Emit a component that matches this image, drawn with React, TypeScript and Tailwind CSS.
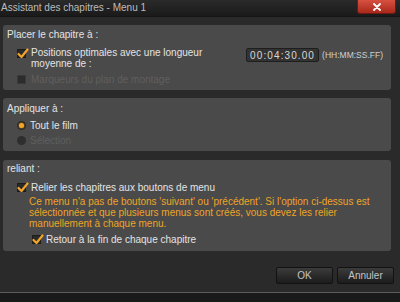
import React from 'react';

type BoxProps = { checked?: boolean; disabled?: boolean };

function CheckBox({ checked, disabled }: BoxProps) {
  return (
    <span
      className={`relative block w-[9px] h-[9px] shrink-0 border ${
        disabled ? 'bg-[#2c2c2c] border-[#3a3a3a]' : 'bg-[#2a2a2a] border-[#1c1c1c]'
      }`}
    >
      {checked && (
        <svg className="absolute -top-[2px] -left-[1px] w-[12px] h-[11px]" viewBox="0 0 12 11">
          <path d="M1.5 6 L4.5 9 L10.5 1.5" stroke="#f2a428" strokeWidth="2.2" fill="none" strokeLinecap="round" strokeLinejoin="round" />
        </svg>
      )}
    </span>
  );
}

function Radio({ checked, disabled }: BoxProps) {
  return (
    <span
      className={`flex items-center justify-center w-[9px] h-[9px] rounded-full shrink-0 ${
        disabled ? 'bg-[#2e2e2e]' : 'bg-[#2a2a2a] border border-[#202020]'
      }`}
    >
      {checked && <span className="block w-[5px] h-[5px] rounded-full bg-[#f2a428] shadow-[0_0_2px_#f2a428]" />}
    </span>
  );
}

export default function App() {
  return (
    <div className="w-[400px] h-[302px] flex flex-col bg-[#2a2a2a] font-['Liberation_Sans',Arial,sans-serif] text-[10px] text-[#e4e4e4] overflow-hidden">
      {/* barre de titre */}
      <div className="h-[17px] shrink-0 flex items-start justify-between bg-gradient-to-b from-[#2a2a2a] to-[#1a1a1a] border-b border-[#161616]">
        <span className="pl-[1px] leading-[15px] text-[#bdbdbd]">Assistant des chapitres - Menu 1</span>
        <div className="mr-[4px] w-[39px] h-[14px] flex items-center justify-center rounded-b-[3px] bg-gradient-to-b from-[#d8503f] to-[#a8281b] border border-t-0 border-[#6e1a12]">
          <svg width="8" height="8" viewBox="0 0 8 8">
            <path d="M1 1 L7 7 M7 1 L1 7" stroke="#ffffff" strokeWidth="1.8" strokeLinecap="round" />
          </svg>
        </div>
      </div>

      <div className="flex-1 flex flex-col pl-[3px] pr-[9px] pt-[8px]">
        {/* Placer le chapitre */}
        <div className="h-[65px] shrink-0 rounded-[3px] bg-[#4a4a4a] pt-[4px] pl-[4px] pr-[8px]">
          <div className="leading-[12px]">Placer le chapitre à :</div>
          <div className="mt-[6px] flex items-start">
            <div className="ml-[10px] mt-[2px]"><CheckBox checked /></div>
            <div className="ml-[5px] w-[180px] leading-[11px]">Positions optimales avec une longueur moyenne de :</div>
            <div className="ml-auto mt-[1px] flex items-center">
              <div className="w-[73px] h-[14px] flex items-center justify-center bg-[#333333] border border-[#1e1e1e] rounded-[2px] tracking-[1.1px] text-[#d8d8d8]">
                00:04:30.00
              </div>
              <span className="ml-[3px] text-[8.5px] text-[#d0d0d0]">(HH:MM:SS.FF)</span>
            </div>
          </div>
          <div className="mt-[5px] flex items-center leading-[11px]">
            <div className="ml-[10px]"><CheckBox disabled /></div>
            <span className="ml-[5px] text-[#5f5f5f]">Marqueurs du plan de montage</span>
          </div>
        </div>

        {/* Appliquer à */}
        <div className="mt-[8px] h-[53px] shrink-0 rounded-[3px] bg-[#4a4a4a] pt-[5px] pl-[4px]">
          <div className="leading-[12px]">Appliquer à :</div>
          <div className="mt-[5px] flex items-center leading-[11px]">
            <div className="ml-[10px]"><Radio checked /></div>
            <span className="ml-[4px]">Tout le film</span>
          </div>
          <div className="mt-[4px] flex items-center leading-[11px]">
            <div className="ml-[10px]"><Radio disabled /></div>
            <span className="ml-[4px] text-[#5f5f5f]">Sélection</span>
          </div>
        </div>

        {/* reliant */}
        <div className="mt-[9px] h-[91px] shrink-0 rounded-[3px] bg-[#4a4a4a] pt-[3px] pl-[4px]">
          <div className="leading-[12px]">reliant :</div>
          <div className="mt-[7px] flex items-center leading-[11px]">
            <div className="ml-[10px]"><CheckBox checked /></div>
            <span className="ml-[5px]">Relier les chapitres aux boutons de menu</span>
          </div>
          <div className="mt-[3px] ml-[22px] leading-[11px] whitespace-nowrap text-[#eea426]">
            Ce menu n'a pas de boutons 'suivant' ou 'précédent'. Si l'option ci-dessus est
            <br />
            sélectionnée et que plusieurs menus sont créés, vous devez les relier
            <br />
            manuellement à chaque menu.
          </div>
          <div className="mt-[5px] flex items-center leading-[11px]">
            <div className="ml-[25px]"><CheckBox checked /></div>
            <span className="ml-[5px]">Retour à la fin de chaque chapitre</span>
          </div>
        </div>

        <div className="mt-[16px] flex justify-end gap-[4px] -mr-[3px]">
          <button className="w-[57px] h-[17px] rounded-[2px] border border-[#121212] bg-gradient-to-b from-[#3c3c3c] to-[#1c1c1c] text-[10px] text-[#c4c4c4] leading-none">
            OK
          </button>
          <button className="w-[57px] h-[17px] rounded-[2px] border border-[#121212] bg-gradient-to-b from-[#3c3c3c] to-[#1c1c1c] text-[10px] text-[#c4c4c4] leading-none">
            Annuler
          </button>
        </div>
      </div>

      <div className="h-[1px] shrink-0 bg-[#5c5c5c]" />
      <div className="h-[9px] shrink-0 bg-[#1a1a1a]" />
    </div>
  );
}
